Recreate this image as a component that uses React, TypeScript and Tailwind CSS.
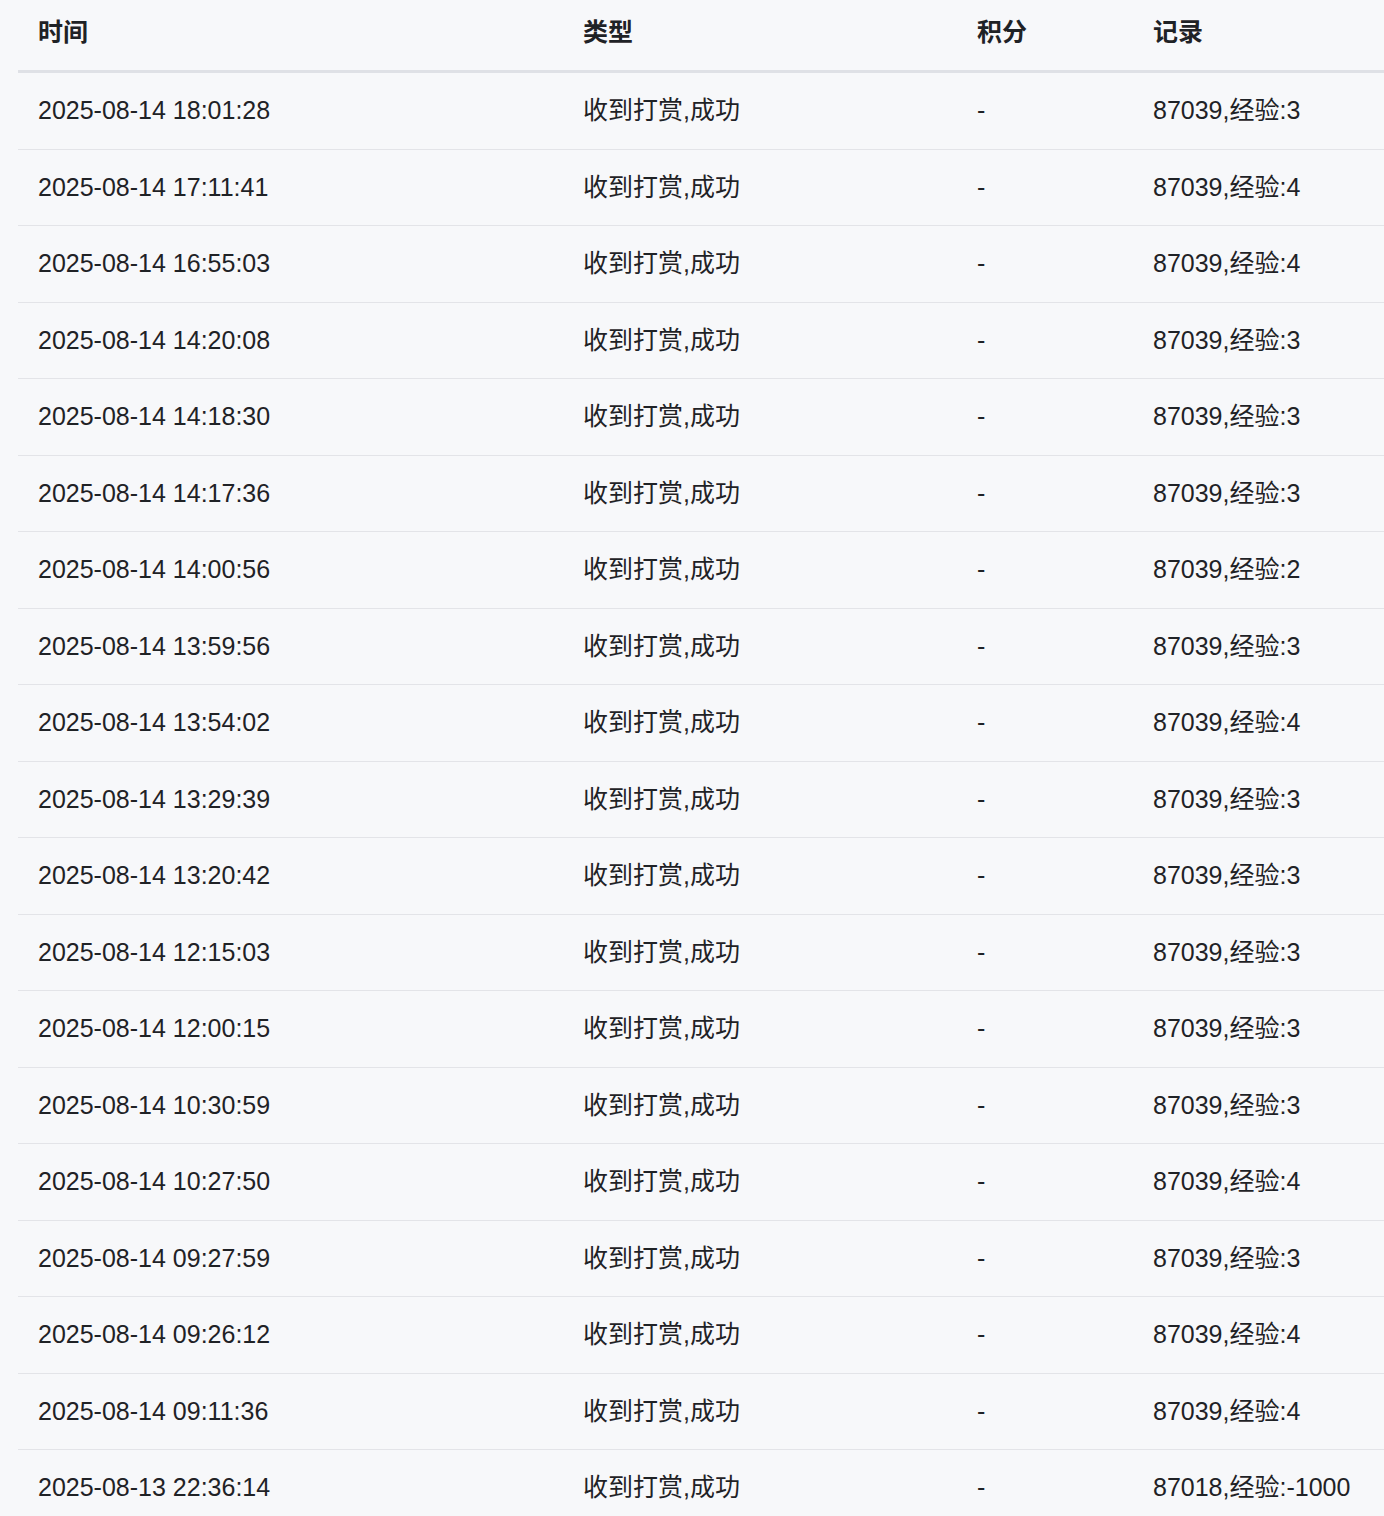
const rows = [
  ['2025-08-14 18:01:28', '87039,经验:3'],
  ['2025-08-14 17:11:41', '87039,经验:4'],
  ['2025-08-14 16:55:03', '87039,经验:4'],
  ['2025-08-14 14:20:08', '87039,经验:3'],
  ['2025-08-14 14:18:30', '87039,经验:3'],
  ['2025-08-14 14:17:36', '87039,经验:3'],
  ['2025-08-14 14:00:56', '87039,经验:2'],
  ['2025-08-14 13:59:56', '87039,经验:3'],
  ['2025-08-14 13:54:02', '87039,经验:4'],
  ['2025-08-14 13:29:39', '87039,经验:3'],
  ['2025-08-14 13:20:42', '87039,经验:3'],
  ['2025-08-14 12:15:03', '87039,经验:3'],
  ['2025-08-14 12:00:15', '87039,经验:3'],
  ['2025-08-14 10:30:59', '87039,经验:3'],
  ['2025-08-14 10:27:50', '87039,经验:4'],
  ['2025-08-14 09:27:59', '87039,经验:3'],
  ['2025-08-14 09:26:12', '87039,经验:4'],
  ['2025-08-14 09:11:36', '87039,经验:4'],
  ['2025-08-13 22:36:14', '87018,经验:-1000'],
]

const headers = ['时间', '类型', '积分', '记录']

export default function App() {
  return (
    <div
      className="min-h-screen bg-[#f7f8fa] pl-[18px] overflow-hidden text-[#1f2226]"
      style={{ fontFamily: '"Liberation Sans", Arial, "Noto Sans CJK SC", sans-serif' }}
    >
      <table className="w-full table-fixed border-separate border-spacing-0 text-[25px]">
        <colgroup>
          <col className="w-[545px]" />
          <col className="w-[394px]" />
          <col className="w-[176px]" />
          <col />
        </colgroup>
        <thead>
          <tr className="text-left">
            {headers.map((h) => (
              <th key={h} className="h-[73px] pl-[20px] pb-[5px] font-bold align-middle border-b-[3px] border-[#dfe1e6]">
                {h}
              </th>
            ))}
          </tr>
        </thead>
        <tbody>
          {rows.map(([time, record], i) => (
            <tr key={i}>
              <td className="h-[76.5px] pl-[20px] align-middle border-b border-[#e3e4e8]">{time}</td>
              <td className="h-[76.5px] pl-[20px] align-middle border-b border-[#e3e4e8]">收到打赏,成功</td>
              <td className="h-[76.5px] pl-[20px] align-middle border-b border-[#e3e4e8]">-</td>
              <td className="h-[76.5px] pl-[20px] align-middle border-b border-[#e3e4e8]">{record}</td>
            </tr>
          ))}
        </tbody>
      </table>
    </div>
  )
}
